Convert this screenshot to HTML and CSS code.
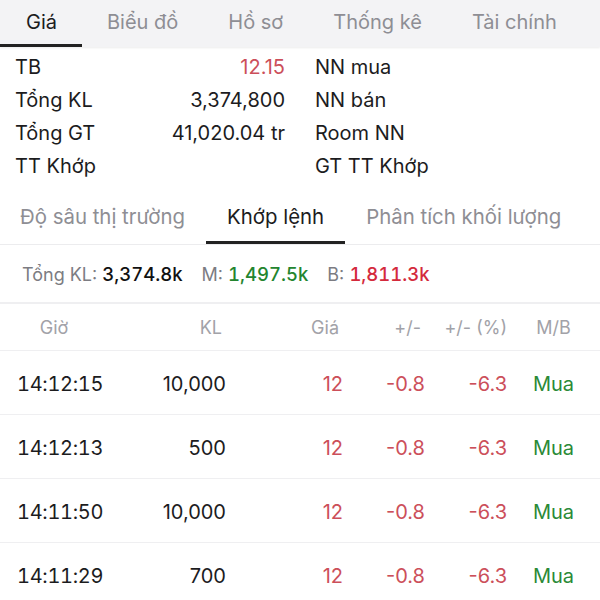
FILE: index.html
```html
<!DOCTYPE html>
<html lang="vi">
<head>
<meta charset="utf-8">
<link rel="stylesheet" href="styles.css">
</head>
<body>
<div class="page">
  <nav class="tabs">
    <div class="tab active">Giá</div>
    <div class="tab">Biểu đồ</div>
    <div class="tab">Hồ sơ</div>
    <div class="tab">Thống kê</div>
    <div class="tab">Tài chính</div>
  </nav>

  <section class="info">
    <div class="lbl">TB</div><div class="val red">12.15</div><div class="lbl right">NN mua</div>
    <div class="lbl">Tổng KL</div><div class="val">3,374,800</div><div class="lbl right">NN bán</div>
    <div class="lbl">Tổng GT</div><div class="val">41,020.04 tr</div><div class="lbl right">Room NN</div>
    <div class="lbl">TT Khớp</div><div class="val"></div><div class="lbl right">GT TT Khớp</div>
  </section>

  <nav class="subtabs">
    <div class="subtab">Độ sâu thị trường</div>
    <div class="subtab active">Khớp lệnh</div>
    <div class="subtab">Phân tích khối lượng</div>
  </nav>

  <div class="summary">
    <span class="slbl">Tổng KL:</span> <span class="sval">3,374.8k</span>
    <span class="slbl gap">M:</span> <span class="sval green">1,497.5k</span>
    <span class="slbl gap">B:</span> <span class="sval bred">1,811.3k</span>
  </div>

  <div class="row head">
    <div class="c1">Giờ</div><div class="c2">KL</div><div class="c3">Giá</div><div class="c4">+/-</div><div class="c5">+/- (%)</div><div class="c6">M/B</div>
  </div>
  <div class="row">
    <div class="c1 time">14:12:15</div><div class="c2">10,000</div><div class="c3 red">12</div><div class="c4 red">-0.8</div><div class="c5 red">-6.3</div><div class="c6 green">Mua</div>
  </div>
  <div class="row">
    <div class="c1 time">14:12:13</div><div class="c2">500</div><div class="c3 red">12</div><div class="c4 red">-0.8</div><div class="c5 red">-6.3</div><div class="c6 green">Mua</div>
  </div>
  <div class="row">
    <div class="c1 time">14:11:50</div><div class="c2">10,000</div><div class="c3 red">12</div><div class="c4 red">-0.8</div><div class="c5 red">-6.3</div><div class="c6 green">Mua</div>
  </div>
  <div class="row">
    <div class="c1 time">14:11:29</div><div class="c2">700</div><div class="c3 red">12</div><div class="c4 red">-0.8</div><div class="c5 red">-6.3</div><div class="c6 green">Mua</div>
  </div>
</div>
</body>
</html>
```

FILE: styles.css
```css
html, body {
  margin: 0;
  padding: 0;
  background: #ffffff;
}
body {
  font-family: Inter, Roboto, "Noto Sans", sans-serif;
  color: #1c1c1e;
  width: 600px;
  height: 600px;
  overflow: hidden;
}
.page {
  width: 600px;
}
.tabs {
  display: flex;
  height: 47px;
  background: #f3f3f5;
  box-shadow: 0 1px 2px rgba(0,0,0,0.08);
}
.tab {
  padding: 0 25px;
  font-size: 20px;
  line-height: 44px;
  color: #8e8e94;
  border-bottom: 3px solid transparent;
  white-space: nowrap;
}
.tab.active {
  padding-left: 26px;
  color: #1c1c1e;
  border-bottom-color: #222;
}
.info {
  display: grid;
  grid-template-columns: 120px 150px 1fr;
  padding: 4px 0 0 15px;
  font-size: 20px;
}
.info > div {
  height: 33px;
  line-height: 33px;
  white-space: nowrap;
}
.info .right {
  padding-left: 30px;
}
.val {
  text-align: right;
}
.red {
  color: #cc4f5a;
}
.green {
  color: #2b8a37;
}
.subtabs {
  display: flex;
  margin-top: 9px;
  border-bottom: 1px solid #ececee;
}
.subtab {
  padding: 0 21px;
  font-size: 20.4px;
  line-height: 49px;
  color: #8e8e94;
  border-bottom: 3px solid transparent;
  white-space: nowrap;
}
.subtab:first-child {
  padding-left: 20px;
}
.subtab.active {
  color: #1c1c1e;
  border-bottom-color: #222;
}
.summary {
  height: 57px;
  line-height: 58px;
  padding-left: 22px;
  font-size: 18px;
  border-bottom: 2px solid #efeff1;
  white-space: nowrap;
}
.slbl {
  color: #7c7c82;
}
.slbl.gap {
  margin-left: 14px;
}
.sval {
  font-size: 18.5px;
  font-weight: 500;
  font-variant-numeric: tabular-nums;
  color: #111;
}
.sval.green {
  color: #23852f;
}
.sval.bred {
  color: #d42a3c;
}
.row {
  display: grid;
  grid-template-columns: 108px 118px 117px 82px 82px 93px;
  height: 60px;
  padding-top: 3px;
  line-height: 60px;
  font-size: 20px;
  border-bottom: 1px solid #efeff1;
}
.row.head {
  height: 44px;
  padding-top: 2px;
  line-height: 44px;
  font-size: 18px;
  color: #a2a2a8;
}
.row.head .c2, .row.head .c3, .row.head .c4 {
  padding-right: 4px;
}
.c1 { text-align: center; }
.c1.time {
  text-align: left;
  padding-left: 17px;
  font-variant-numeric: tabular-nums;
  letter-spacing: -0.3px;
  white-space: nowrap;
}
.c2, .c3, .c4, .c5 { text-align: right; }
.c6 { text-align: center; }
```
